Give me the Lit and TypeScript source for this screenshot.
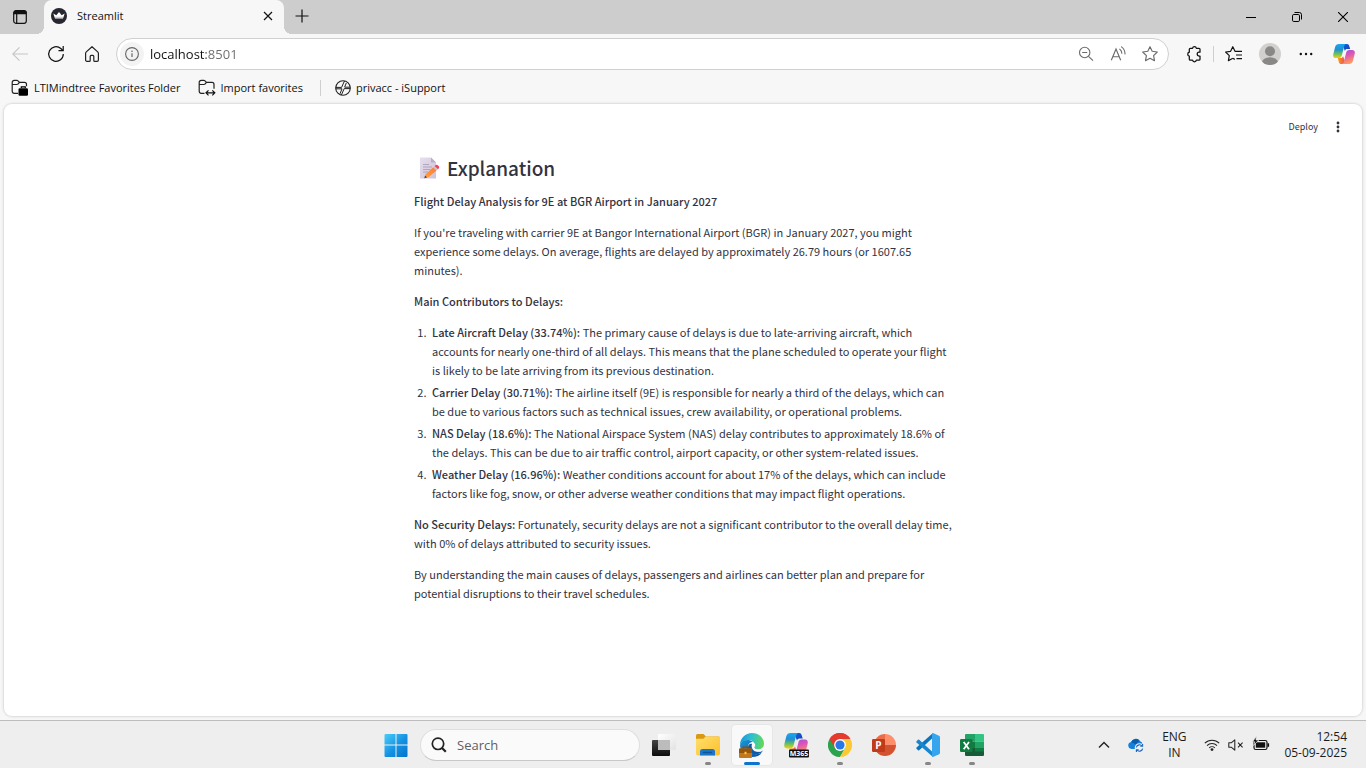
import { LitElement, html, svg, css, type TemplateResult } from "lit";
import { customElement, property } from "lit/decorators.js";
import { classMap } from "lit/directives/class-map.js";

const resetStyles = css`
  :host,
  * {
    box-sizing: border-box;
  }
  button {
    appearance: none;
    border: 0;
    padding: 0;
    margin: 0;
    background: none;
    color: inherit;
    font: inherit;
    display: flex;
    align-items: center;
    justify-content: center;
    cursor: default;
  }
  svg {
    display: block;
    flex: none;
  }
  a {
    color: inherit;
    text-decoration: none;
  }
`;

const icon = (size: number, body: TemplateResult, viewBox = size) =>
  html`<svg width=${size} height=${size} viewBox="0 0 ${viewBox} ${viewBox}" fill="none" aria-hidden="true">${body}</svg>`;

/* Window and toolbar icons */

const tabActionsIcon = icon(16, svg`
  <rect x="1.7" y="1.7" width="12.6" height="12.6" rx="2.2" stroke="#111" stroke-width="1.2"/>
  <path d="M1.5 5.2V4a2.5 2.5 0 0 1 2.5-2.5h8A2.5 2.5 0 0 1 14.5 4v1.2z" fill="#111"/>
  <path d="M4.7 5v9" stroke="#111" stroke-width="1.2"/>`);

const streamlitIcon = icon(16, svg`
  <circle cx="8" cy="8" r="8" fill="#262730"/>
  <path d="M2.3 5.6l3 1.7L8 4l2.7 3.3 3-1.7-1.7 5H4z" fill="#fff"/>
  <path d="M4 9.300h8" stroke="#b8b8bd" stroke-width=".8"/>`);

const closeTabIcon = icon(10, svg`<path d="M1 1l8 8M9 1L1 9" stroke="#111" stroke-width="1.2"/>`);
const plusIcon = icon(14, svg`<path d="M7 .5v13M.5 7h13" stroke="#111" stroke-width="1.2"/>`);
const minimizeIcon = icon(10, svg`<path d="M0 5.5h10" stroke="#000"/>`);
const restoreIcon = icon(10, svg`
  <rect x=".5" y="2.5" width="7" height="7" rx="1.3" stroke="#000"/>
  <path d="M2.5.5h4.8A2.2 2.2 0 0 1 9.5 2.7v4.8" stroke="#000"/>`);
const closeWindowIcon = icon(10, svg`<path d="M0 0l10 10M10 0L0 10" stroke="#000" stroke-width="1.1"/>`);

const backIcon = icon(16, svg`<path d="M16 8H.8M7.5 1.3L.8 8l6.7 6.7" stroke="#c6c6c6" stroke-width="1.2"/>`);
const refreshIcon = icon(18, svg`
  <path d="M16.3 9a7.3 7.3 0 1 1-2.5-5.500L16 5.5" stroke="#111" stroke-width="1.2"/>
  <path d="M16.2 1v4.7h-4.7" stroke="#111" stroke-width="1.2"/>`);
const homeIcon = icon(18, svg`
  <path d="M2.600 8.300c0-.6.300-1 .7-1.400L9 1.700l5.700 5.200c.4.400.7.800.7 1.400V15c0 .8-.5 1.300-1.300 1.300h-2.400c-.5 0-.9-.4-.9-.9v-4c0-.6-.4-1-1-1H8.200c-.6 0-1 .4-1 1v4c0 .5-.4.9-.9.9H3.900c-.8 0-1.300-.5-1.300-1.300z" stroke="#222" stroke-width="1.200" stroke-linejoin="round"/>`);
const infoIcon = icon(14, svg`
  <circle cx="7" cy="7" r="6.4" stroke="#666" stroke-width="1.1"/>
  <path d="M7 6.2V10" stroke="#666" stroke-width="1.2"/><circle cx="7" cy="4.2" r=".8" fill="#666"/>`);
const zoomOutIcon = icon(16, svg`
  <circle cx="6.7" cy="6.5" r="5.2" stroke="#6b6b6b" stroke-width="1.1"/>
  <path d="M4.2 6.5h5M10.5 10.3l4.5 4.4" stroke="#6b6b6b" stroke-width="1.1"/>`);
const readAloudIcon = icon(17, svg`
  <path d="M1.3 14.3L6 3l4.7 11.3M2.8 10.700h6.400" stroke="#6b6b6b" stroke-width="1.150"/>
  <path d="M9.800 3.200c1.300.9 2 2.400 2 4M11.500.9c2.200 1.600 3.500 4 3.500 7" stroke="#6b6b6b" stroke-width="1.100" stroke-linecap="round"/>`);
const starIcon = icon(18, svg`
  <path d="M9 1.700l2.200 4.600 5.100.7-3.700 3.600.9 5.100L9 13.300l-4.500 2.400.9-5.100L1.700 7l5.100-.7z" stroke="#6b6b6b" stroke-width="1.150" stroke-linejoin="round"/>`);
const extensionsIcon = icon(18, svg`
  <path d="M6.300 3.300h1.200a2 2 0 0 1 3.900 0H14c.6 0 1 .4 1 1V7.200h-.9a1.900 1.900 0 0 0 0 3.800h.9v3.200c0 .6-.4 1-1 1h-2.600a2 2 0 0 1-3.900 0H5.300c-.6 0-1-.4-1-1v-3.100a2 2 0 0 1 0-3.900V4.300c0-.6.4-1 1-1z" stroke="#111" stroke-width="1.250" stroke-linejoin="round"/>`);
const favoritesIcon = icon(18, svg`
  <path d="M10.700 6.400l-.7-.1-2.200-4.600-2.200 4.600-5 .7 3.700 3.600-.9 5.100 4.400-2.400M10.700 6.400h6.300M11 10h6M11.500 13.600H17" stroke="#111" stroke-width="1.200" stroke-linejoin="round"/>
  <path d="M8 13.200l1.800 1.300" stroke="#111" stroke-width="1.200"/>`);
const avatarIcon = icon(22, svg`
  <defs><clipPath id="avatar-clip"><circle cx="11" cy="11" r="11"/></clipPath></defs>
  <circle cx="11" cy="11" r="11" fill="#d2d0ce"/>
  <g clip-path="url(#avatar-clip)" fill="#8a8886"><circle cx="11" cy="8.3" r="5"/><ellipse cx="11" cy="19.5" rx="8" ry="5.2"/></g>`);
const moreIcon = icon(14, svg`
  <g fill="#111"><circle cx="1.8" cy="7" r="1.2"/><circle cx="7" cy="7" r="1.2"/><circle cx="12.2" cy="7" r="1.2"/></g>`);

const copilotArt = (id: string) => svg`
  <defs>
    <linearGradient id="${id}-a" x1="0" y1="0" x2="0" y2="1"><stop offset="0" stop-color="#1aa7ee"/><stop offset=".4" stop-color="#1f8fd6"/><stop offset=".68" stop-color="#5fbf62"/><stop offset="1" stop-color="#f4cf12"/></linearGradient>
    <linearGradient id="${id}-b" x1="0" y1="0" x2=".3" y2="1"><stop offset="0" stop-color="#9a52ea"/><stop offset=".45" stop-color="#dd56b4"/><stop offset="1" stop-color="#ff9a5e"/></linearGradient>
    <linearGradient id="${id}-c" x1="0" y1="0" x2="1" y2="1"><stop offset="0" stop-color="#0b63d8"/><stop offset="1" stop-color="#1c3fb8"/></linearGradient>
    <linearGradient id="${id}-d" x1="0" y1="0" x2="1" y2="0"><stop offset="0" stop-color="#f9a01b"/><stop offset="1" stop-color="#ef3f5c"/></linearGradient>
  </defs>
  <path d="M10 1h5.200c1.300 0 2 .8 2.400 2l1.100 3.600h-3.200c-1.300 0-2.100.7-2.500 2z" fill="url(#${id}-c)"/>
  <path d="M14 23H8.800c-1.300 0-2-.8-2.400-2l-1.100-4.600h3.200c1.300 0 2.100-.7 2.500-2z" fill="url(#${id}-d)"/>
  <path d="M6.600 1h8c-1.500.3-2.100 1.300-2.500 2.700L9.600 13.600c-.5 1.800-1.500 2.800-3.300 2.800H3.200C.6 16.400-.3 14.500.4 12L2.300 4.300C2.900 2.200 4.300 1 6.600 1z" fill="url(#${id}-a)"/>
  <path d="M17.400 23h-8c1.500-.3 2.100-1.300 2.500-2.700l2.500-9.900c.5-1.800 1.500-2.800 3.300-2.800h3.100c2.600 0 3.500 1.900 2.800 4.400l-1.900 7.700c-.6 2.100-2 3.300-4.300 3.300z" fill="url(#${id}-b)"/>`;

const copilotIcon = icon(22, copilotArt("copilot"), 24);

const managedFolderIcon = icon(18, svg`
  <path d="M7 14.300H3.200A2 2 0 0 1 1.200 12.300V3.400a2 2 0 0 1 2-2h2.600c.5 0 .9.200 1.200.5l1.500 1.500h5a2 2 0 0 1 2 2v1.800M1.500 5.500h4.300c.5 0 .9-.1 1.200-.5l1.500-1.600" stroke="#222" stroke-width="1.200"/>
  <rect x="7.500" y="9.200" width="9.500" height="7.600" rx="1.300" fill="#000"/>
  <path d="M10.300 9V7.800h4V9" stroke="#000" stroke-width="1.200"/>`);
const importFolderIcon = icon(18, svg`
  <path d="M6.500 14.300H3.200A2 2 0 0 1 1.200 12.300V3.400a2 2 0 0 1 2-2h2.600c.5 0 .9.200 1.200.5l1.500 1.500h5.500a2 2 0 0 1 2 2v4.300M1.500 5.500h4.300c.5 0 .9-.1 1.200-.5l1.500-1.600" stroke="#222" stroke-width="1.200"/>
  <path d="M8.300 13.800h8.200M10.500 11.300L8 13.800l2.500 2.500M14.300 11.300l2.500 2.500-2.500 2.500" stroke="#111" stroke-width="1.200"/>`);
const supportIcon = icon(16, svg`
  <circle cx="8" cy="8" r="7.3" stroke="#222" stroke-width="1.1"/>
  <path d="M.8 7.400h5.800L9.500.9M.8 8.800h6.200L5 13.800M15.200 7.200H9.800M15.200 8.600H9.200L6.300 15.200M9.600 7.200L11.300 3" stroke="#222" stroke-width="1"/>`);

/* Page icons */

const kebabIcon = icon(12, svg`
  <g fill="#31333f"><circle cx="6" cy="2" r="1.400"/><circle cx="6" cy="6" r="1.400"/><circle cx="6" cy="10" r="1.400"/></g>`);

const memoIcon = icon(22, svg`
  <defs>
    <linearGradient id="memo-sheet" x1="0" y1="0" x2="1" y2="1"><stop offset="0" stop-color="#e6dfee"/><stop offset="1" stop-color="#cdc3d8"/></linearGradient>
    <linearGradient id="memo-pencil" x1="1" y1="0" x2="0" y2="1"><stop offset="0" stop-color="#ff7a3c"/><stop offset="1" stop-color="#ffa23a"/></linearGradient>
  </defs>
  <path d="M2 .5h11L18 5.500V21.500H2z" fill="url(#memo-sheet)"/>
  <path d="M13 .5v5h5z" fill="#b9adc8"/>
  <path d="M5 10h9M5 12.500h7.500M5 15h5M5 7.500h6" stroke="#a79bb5" stroke-width=".8"/>
  <path d="M15.300 10.200l3.200 3.200-8 6.800-3.700.6.800-3.600z" fill="url(#memo-pencil)"/>
  <path d="M15.300 10.200l1.300-1.200 3.300 3.200-1.400 1.200z" fill="#c9c3cf"/>
  <path d="M16.600 9l1-.8c.8-.6 1.800-.5 2.400.2l.8.900c.6.700.5 1.600-.1 2.200l-.8.700z" fill="#f0405c"/>
  <path d="M6.300 21.200l.8-2.700 1.900 2z" fill="#4a3550"/>`);

/* Taskbar icons */

const startIcon = icon(24, svg`
  <defs><linearGradient id="start-fill" gradientUnits="userSpaceOnUse" x1="0" y1="0" x2="24" y2="24"><stop offset="0" stop-color="#4fd0fb"/><stop offset=".55" stop-color="#1391e2"/><stop offset="1" stop-color="#0672ca"/></linearGradient></defs>
  <path d="M1.500 1H11.500V11.500H.5V2q0-1 1-1zM12.500 1H22.500q1 0 1 1V11.500h-11zM.5 12.500h11V24h-10q-1 0-1-1zM12.500 12.500h11V23q0 1-1 1h-10z" fill="url(#start-fill)"/>`);
const searchIcon = icon(16, svg`
  <circle cx="7" cy="6.8" r="5.7" stroke="#222" stroke-width="1.7"/><path d="M11 10.900l3.800 3.900" stroke="#222" stroke-width="2.200"/>`);
const taskViewIcon = icon(24, svg`
  <defs>
    <linearGradient id="tv-back" x1="0" y1="0" x2="0" y2="1"><stop offset="0" stop-color="#454545"/><stop offset="1" stop-color="#0c0c0c"/></linearGradient>
    <linearGradient id="tv-front" x1="0" y1="0" x2="1" y2="1"><stop offset="0" stop-color="#fff"/><stop offset="1" stop-color="#e2e2e2"/></linearGradient>
  </defs>
  <rect x="0" y="7" width="18" height="16" rx="1" fill="url(#tv-back)"/>
  <rect x="6" y="1" width="18" height="16" rx="1" fill="url(#tv-front)"/>
  <path d="M6 7h12v10H6z" fill="#bcbcbc"/>`);
const explorerIcon = icon(26, svg`
  <defs><linearGradient id="folder" x1="0" y1="0" x2="1" y2="1"><stop offset="0" stop-color="#ffdf6d"/><stop offset="1" stop-color="#fdbf2c"/></linearGradient></defs>
  <path d="M1 3.500q0-1.500 1.500-1.500h6l2.500 2.500H23.500q1.500 0 1.500 1.500v6H1z" fill="#d99a12"/>
  <path d="M1 7.500q0-.8.800-.8H8.500l2-2.200H23.700q1.300 0 1.300 1.300V21.500q0 2-2 2H3q-2 0-2-2z" fill="url(#folder)"/>
  <path d="M5 23.500v-4q0-2.500 2.500-2.500h10q2.500 0 2.500 2.500v4z" fill="#1976c9"/>
  <path d="M8.500 20.500h8" stroke="#0f5499" stroke-width="1.400" stroke-linecap="round"/>`);
const edgeIcon = icon(26, svg`
  <defs>
    <linearGradient id="edge-top" x1="0" y1=".2" x2="1" y2=".3"><stop offset="0" stop-color="#1d93d8"/><stop offset=".5" stop-color="#2fc2cf"/><stop offset="1" stop-color="#63d856"/></linearGradient>
    <linearGradient id="edge-side" x1="0" y1="0" x2="1" y2="1"><stop offset="0" stop-color="#1698dc"/><stop offset="1" stop-color="#0c4f9e"/></linearGradient>
  </defs>
  <path d="M1 13C1 6 6.500 1 13 1s12 4.800 12 10.500c0 3.800-2.800 6-6 6-3 0-4.600-1.300-4.600-2.400 0-.8 1-1.100 1-2.700 0-2.400-2.400-4.400-6-4.400C5 8 2 10.500 1 13z" fill="url(#edge-top)"/>
  <path d="M1 13c1-3.500 4.500-5.500 8.500-5 2 .2 3.500 1 4.500 2-3-.2-5 2.200-5 5.200 0 4 3.500 7 8 7 2.500 0 4.500-.8 6-2C21 23.500 17.500 25 13 25 6.200 25 1 19.800 1 13z" fill="url(#edge-side)"/>
  <path d="M13.500 12c-1 3 .5 7.500 6 7.500 2 0 3.500-.6 4.500-1-1 2.300-4 3.900-7 3.900-4.500 0-8-3-8-7 0-2.200 1.500-4.500 4.500-3.400z" fill="#0d5ba8"/>
  <path d="M13.800 10.500c1.600.3 2.600 1.500 2.400 3-.2 1.200-1.200 1.700-.8 2.600.5 1 2.300 1.500 4.500 1.300 1.600-.2 3-.7 4-1.700.3 1-.1 2.500-.6 3.200-2.500 1.300-6.300 1.300-8.500-.5-2.200-1.900-3-5-1-7.900z" fill="#f9f9f9"/>
  <rect x="0" y="16.500" width="13" height="9.500" rx="1" fill="#c4761a"/>
  <path d="M0 17.500q0-1 1-1h11q1 0 1 1v3.500H0z" fill="#96530b"/>
  <path d="M4 16.500v-1.300h5v1.300" stroke="#8c4d09" stroke-width="1.200"/><rect x="5.500" y="19.800" width="2" height="2.400" fill="#ffc83d"/>`);
const m365Icon = icon(26, svg`
  <g transform="translate(1 0)">${copilotArt("m365")}</g>
  <rect x="6" y="17.500" width="20" height="8" rx="1" fill="#111"/>
  <text x="16" y="24" font-family="Open Sans, sans-serif" font-size="7" font-weight="700" fill="#fff" text-anchor="middle">M365</text>`);
const chromeIcon = icon(24, svg`
  <path d="M12 12L1.600 6A12 12 0 0 1 22.400 6z" fill="#e33b2e"/>
  <path d="M12 12L1.600 6A12 12 0 0 0 12 24l5.200-9z" fill="#2ba24c"/>
  <path d="M12 12l5.200 3L12 24A12 12 0 0 0 22.400 6H12z" fill="#fcc934"/>
  <path d="M1.600 6l5.200 9L12 6h10.400A12 12 0 0 0 1.600 6z" fill="#e33b2e"/>
  <circle cx="12" cy="12" r="5.900" fill="#fff"/><circle cx="12" cy="12" r="4.600" fill="#2b76e8"/>`);
const powerpointIcon = icon(26, svg`
  <path d="M14 2A11 11 0 0 0 3 13h11z" fill="#ec6c47"/>
  <path d="M14 2a11 11 0 0 1 11 11l-5.500 2L14 13z" fill="#ff8f6b"/>
  <path d="M3 13a11 11 0 0 0 22 0z" fill="#d35230"/>
  <rect x="1" y="7" width="13" height="13" rx="1.200" fill="#c13b1b"/>
  <text x="7.500" y="17.200" font-family="Open Sans, sans-serif" font-size="10" font-weight="700" fill="#fff" text-anchor="middle">P</text>`);
const vscodeIcon = icon(24, svg`
  <path d="M17 0l-1 5.500L3.200 17.200c-.4.300-.8.300-1.100 0L.5 15.700c-.4-.4-.4-.9 0-1.200z" fill="#0b76bd"/>
  <path d="M17 24l-1-5.500L3.200 6.800c-.4-.3-.8-.3-1.100 0L.5 8.300c-.4.400-.4.900 0 1.200z" fill="#1787d1"/>
  <path d="M17 24c-.6-.2-1-.5-1-1V1c0-.5.400-.8 1-1l6 2.800c.6.300 1 .8 1 1.500v15.400c0 .7-.4 1.200-1 1.500z" fill="#35a6ee"/>`);
const excelIcon = icon(26, svg`
  <path d="M7 2h9v7.500H6V3q0-1 1-1z" fill="#21a366"/><path d="M16 2h8q1 0 1 1v6.500h-9z" fill="#33c481"/>
  <path d="M6 9.500h10V16H6z" fill="#107c41"/><path d="M16 9.500h9V16h-9z" fill="#21a366"/>
  <path d="M6 16h19v7q0 1-1 1H7q-1 0-1-1z" fill="#185c37"/><path d="M16 16h9v3.500h-9z" fill="#107c41"/>
  <rect x="1" y="7" width="12.500" height="13" rx="1.200" fill="#107c41"/>
  <path d="M4.700 10l5.300 7.200M10 10l-5.300 7.200" stroke="#fff" stroke-width="1.800"/>`);

const chevronUpIcon = icon(12, svg`<path d="M1 8.500l5-5 5 5" stroke="#222" stroke-width="1.400"/>`);
const onedriveIcon = icon(16, svg`
  <path d="M3.500 12a3.600 3.600 0 0 1-.4-7.100A5 5 0 0 1 11.800 4a3.800 3.800 0 0 1 2.700 3.500V12z" fill="#1380da"/>
  <path d="M3.100 4.900A5 5 0 0 1 11.800 4c-1.600.3-2.800 1.600-3.600 3.600z" fill="#0b5cad"/>
  <circle cx="11.500" cy="11" r="4.800" fill="#eee"/>
  <path d="M8.300 10.300a3.300 3.300 0 0 1 5.900-1.100M14.700 11.700a3.300 3.300 0 0 1-5.900 1.100M14.600 7v2.300h-2.300M8.400 15v-2.300h2.300" stroke="#1565c0" stroke-width="1.100"/>`, 16);
const wifiIcon = icon(16, svg`
  <g stroke="#222" stroke-width="1.100"><path d="M.8 6.200a10.200 10.200 0 0 1 14.400 0M3 8.600a7.100 7.100 0 0 1 10 0M5.200 10.900a4 4 0 0 1 5.600 0"/></g><circle cx="8" cy="12.600" r="1.400" fill="#222"/>`);
const mutedIcon = icon(16, svg`
  <path d="M.8 5.800v4.400h2.400l3.600 3V2.800l-3.600 3zM10 5.700l4.600 4.600M14.600 5.700L10 10.300" stroke="#222" stroke-width="1.050" stroke-linejoin="round"/>`);
const batteryIcon = icon(18, svg`
  <rect x="2" y="4.500" width="13" height="9" rx="1.800" stroke="#111" stroke-width="1.200"/>
  <rect x="3.800" y="6.300" width="9.400" height="5.400" fill="#111"/>
  <path d="M16.300 7.300v3.500" stroke="#111" stroke-width="1.600"/>
  <path d="M4.300 .5L.5 5.800h2.300L1.600 9.500 6.700 4H4z" fill="#111" stroke="#eee" stroke-width=".7"/>`);

@customElement("browser-chrome")
class BrowserChrome extends LitElement {
  @property() pageTitle = "";
  @property() address = "";

  static styles = [
    resetStyles,
    css`
      :host {
        display: block;
        background: #f7f7f7;
        color: #111;
        font: 11px/16px "Open Sans", "Segoe UI", sans-serif;
      }
      .strip {
        display: flex;
        height: 34px;
        background: #cdcdcd;
      }
      .tab-actions {
        width: 40px;
        margin-right: 4px;
      }
      .tab {
        position: relative;
        width: 240px;
        display: flex;
        align-items: center;
        gap: 10px;
        padding: 0 11px 2px 7px;
        background: #f7f7f7;
        border-radius: 8px 8px 0 0;
      }
      .tab::before,
      .tab::after {
        content: "";
        position: absolute;
        bottom: 0;
        width: 8px;
        height: 8px;
      }
      .tab::before {
        left: -8px;
        background: radial-gradient(circle at 0 0, transparent 8px, #f7f7f7 8px);
      }
      .tab::after {
        right: -8px;
        background: radial-gradient(circle at 100% 0, transparent 8px, #f7f7f7 8px);
      }
      .tab-title {
        flex: 1;
      }
      .new-tab {
        width: 36px;
        height: 32px;
      }
      .window-controls {
        display: flex;
        margin-left: auto;
      }
      .window-controls button {
        width: 46px;
      }
      .toolbar {
        display: flex;
        align-items: center;
        padding: 4px 2px 2px 2px;
      }
      .tool {
        width: 36px;
        height: 32px;
      }
      .copilot {
        width: 40px;
      }
      .address-bar {
        flex: 1;
        display: flex;
        align-items: center;
        height: 32px;
        margin: 0 7px 0 6px;
        padding: 0 2px 0 3px;
        background: #fff;
        border: 1px solid #d0d0d0;
        border-radius: 16px;
      }
      .site-info {
        width: 24px;
        height: 24px;
        border-radius: 12px;
        background: #f3f3f3;
      }
      .address {
        flex: 1;
        min-width: 0;
        margin-left: 6px;
        padding: 0;
        border: 0;
        outline: 0;
        background: linear-gradient(to right, #111 56px, #6b6b6b 56px);
        background-clip: text;
        -webkit-background-clip: text;
        color: transparent;
        font: 13px/20px "Open Sans", "Segoe UI", sans-serif;
      }
      .address-bar .tool {
        width: 32px;
      }
      .divider {
        width: 1px;
        height: 16px;
        margin: 0 2px 0 1px;
        background: #cfcfcf;
      }
      .favorites {
        display: flex;
        align-items: center;
        height: 32px;
        padding: 0 11px;
      }
      .favorite {
        display: flex;
        align-items: center;
        gap: 5px;
        margin-right: 17px;
      }
      .favorites .divider {
        margin: 0 14px 0 0;
      }
    `,
  ];

  render() {
    return html`
      <div class="strip">
        <button class="tab-actions" aria-label="Tab actions menu">${tabActionsIcon}</button>
        <div class="tab">
          ${streamlitIcon}
          <span class="tab-title">${this.pageTitle}</span>
          <button aria-label="Close tab">${closeTabIcon}</button>
        </div>
        <button class="new-tab" aria-label="New tab">${plusIcon}</button>
        <div class="window-controls">
          <button aria-label="Minimize">${minimizeIcon}</button>
          <button aria-label="Restore">${restoreIcon}</button>
          <button aria-label="Close">${closeWindowIcon}</button>
        </div>
      </div>
      <nav class="toolbar">
        <button class="tool" aria-label="Back" disabled>${backIcon}</button>
        <button class="tool" aria-label="Refresh">${refreshIcon}</button>
        <button class="tool" aria-label="Home">${homeIcon}</button>
        <div class="address-bar">
          <button class="site-info" aria-label="View site information">${infoIcon}</button>
          <input class="address" aria-label="Address and search bar" .value=${this.address} />
          <button class="tool" aria-label="Zoom out">${zoomOutIcon}</button>
          <button class="tool" aria-label="Read aloud">${readAloudIcon}</button>
          <button class="tool" aria-label="Add to favorites">${starIcon}</button>
        </div>
        <button class="tool" aria-label="Extensions">${extensionsIcon}</button>
        <span class="divider"></span>
        <button class="tool" aria-label="Favorites">${favoritesIcon}</button>
        <button class="tool" aria-label="Profile">${avatarIcon}</button>
        <button class="tool" aria-label="Settings and more">${moreIcon}</button>
        <button class="tool copilot" aria-label="Copilot">${copilotIcon}</button>
      </nav>
      <nav class="favorites">
        <a class="favorite" href="#">${managedFolderIcon}LTIMindtree Favorites Folder</a>
        <a class="favorite" href="#">${importFolderIcon}Import favorites</a>
        <span class="divider"></span>
        <a class="favorite" href="#">${supportIcon}privacc - iSupport</a>
      </nav>
    `;
  }
}

interface Contributor {
  label: string;
  text: string;
}

const contributors: Contributor[] = [
  {
    label: "Late Aircraft Delay (33.74%):",
    text: "The primary cause of delays is due to late-arriving aircraft, which accounts for nearly one-third of all delays. This means that the plane scheduled to operate your flight is likely to be late arriving from its previous destination.",
  },
  {
    label: "Carrier Delay (30.71%):",
    text: "The airline itself (9E) is responsible for nearly a third of the delays, which can be due to various factors such as technical issues, crew availability, or operational problems.",
  },
  {
    label: "NAS Delay (18.6%):",
    text: "The National Airspace System (NAS) delay contributes to approximately 18.6% of the delays. This can be due to air traffic control, airport capacity, or other system-related issues.",
  },
  {
    label: "Weather Delay (16.96%):",
    text: "Weather conditions account for about 17% of the delays, which can include factors like fog, snow, or other adverse weather conditions that may impact flight operations.",
  },
];

@customElement("streamlit-page")
class StreamlitPage extends LitElement {
  static styles = [
    resetStyles,
    css`
      :host {
        display: block;
        background: #fff;
        color: #31333f;
        font: 11px/19px "Source Sans Pro", "Noto Sans CJK JP", sans-serif;
      }
      header {
        display: flex;
        justify-content: flex-end;
        align-items: center;
        gap: 14px;
        height: 45px;
        padding-right: 18px;
        font-size: 9px;
      }
      .frame {
        padding-left: 4px;
      }
      main {
        max-width: 542px;
        margin: 0 auto;
      }
      h3 {
        display: flex;
        align-items: center;
        gap: 7px;
        margin: 0 0 12px;
        padding: 6px 0 0 4px;
        font-size: 19px;
        line-height: 25px;
        font-weight: 500;
      }
      p {
        margin: 0 0 12px;
      }
      strong {
        font-weight: 500;
      }
      ol {
        margin: 0 0 12px;
        padding: 0 0 0 15px;
      }
      li {
        margin: 0 0 3px;
        padding-left: 3px;
      }
      li:last-child {
        margin: 0;
      }
    `,
  ];

  render() {
    return html`
      <header>
        <button>Deploy</button>
        <button aria-label="Main menu">${kebabIcon}</button>
      </header>
      <div class="frame">
        <main>
          <h3>${memoIcon}Explanation</h3>
          <p><strong>Flight Delay Analysis for 9E at BGR Airport in January 2027</strong></p>
          <p>
            If you're traveling with carrier 9E at Bangor International Airport (BGR) in January 2027, you might
            experience some delays. On average, flights are delayed by approximately 26.79 hours (or 1607.65 minutes).
          </p>
          <p><strong>Main Contributors to Delays:</strong></p>
          <ol>
            ${contributors.map((c) => html`<li><strong>${c.label}</strong> ${c.text}</li>`)}
          </ol>
          <p>
            <strong>No Security Delays:</strong> Fortunately, security delays are not a significant contributor to the
            overall delay time, with 0% of delays attributed to security issues.
          </p>
          <p>
            By understanding the main causes of delays, passengers and airlines can better plan and prepare for
            potential disruptions to their travel schedules.
          </p>
        </main>
      </div>
    `;
  }
}

interface TaskbarApp {
  name: string;
  art: TemplateResult;
  running?: boolean;
  active?: boolean;
}

const taskbarApps: TaskbarApp[] = [
  { name: "Task View", art: taskViewIcon },
  { name: "File Explorer", art: explorerIcon, running: true },
  { name: "Microsoft Edge", art: edgeIcon, running: true, active: true },
  { name: "Microsoft 365 Copilot", art: m365Icon },
  { name: "Google Chrome", art: chromeIcon, running: true },
  { name: "PowerPoint", art: powerpointIcon },
  { name: "Visual Studio Code", art: vscodeIcon, running: true },
  { name: "Excel", art: excelIcon, running: true },
];

@customElement("task-bar")
class TaskBar extends LitElement {
  static styles = [
    resetStyles,
    css`
      :host {
        display: grid;
        grid-template-columns: 1fr auto 1fr;
        align-items: center;
        height: 48px;
        padding-left: 2px;
        background: #eeeeee;
        border-top: 1px solid #bdbdbd;
        color: #1b1b1b;
        font: 12px/16px "Open Sans", "Segoe UI", sans-serif;
      }
      .apps {
        grid-column: 2;
        display: flex;
        align-items: center;
      }
      .app {
        position: relative;
        width: 40px;
        height: 40px;
        margin: 0 2px;
        border-radius: 4px;
      }
      .active {
        background: #f9f9f9;
        box-shadow: 0 0 0 1px #e6e6e6;
      }
      .running::after {
        content: "";
        position: absolute;
        bottom: 0;
        width: 6px;
        height: 3px;
        border-radius: 2px;
        background: #868686;
      }
      .active::after {
        width: 16px;
        background: #0a74d0;
      }
      .search {
        display: flex;
        align-items: center;
        gap: 10px;
        width: 220px;
        height: 32px;
        margin: 0 2px;
        padding: 0 10px;
        background: #fafafa;
        border: 1px solid #dedede;
        border-bottom-color: #c8c8c8;
        border-radius: 16px;
      }
      .search input {
        flex: 1;
        min-width: 0;
        padding: 0;
        border: 0;
        outline: 0;
        background: none;
        font: 13px/20px "Open Sans", "Segoe UI", sans-serif;
      }
      .search input::placeholder {
        color: #5f5f5f;
        opacity: 1;
      }
      .tray {
        grid-column: 3;
        justify-self: end;
        display: flex;
        align-items: center;
        padding-right: 19px;
      }
      .tray-item {
        width: 32px;
        height: 40px;
      }
      .language {
        width: 44px;
      }
      .status {
        gap: 8px;
        padding: 0 14px 0 8px;
      }
      .clock {
        flex-direction: column;
        align-items: flex-end;
      }
    `,
  ];

  render() {
    return html`
      <div class="apps">
        <button class="app" aria-label="Start">${startIcon}</button>
        <label class="search">${searchIcon}<input type="text" placeholder="Search" aria-label="Search" /></label>
        ${taskbarApps.map(
          (app) => html`<button
            class=${classMap({ app: true, running: !!app.running, active: !!app.active })}
            aria-label=${app.name}
          >
            ${app.art}
          </button>`,
        )}
      </div>
      <div class="tray">
        <button class="tray-item" aria-label="Show hidden icons">${chevronUpIcon}</button>
        <button class="tray-item" aria-label="OneDrive">${onedriveIcon}</button>
        <button class="language">ENG<br />IN</button>
        <button class="status" aria-label="Network, volume and battery">${wifiIcon}${mutedIcon}${batteryIcon}</button>
        <button class="clock"><span>12:54</span><span>05-09-2025</span></button>
      </div>
    `;
  }
}

@customElement("app-root")
class AppRoot extends LitElement {
  static styles = css`
    :host {
      display: flex;
      flex-direction: column;
      height: 100vh;
      background: #f7f7f7;
    }
    .page {
      flex: 1;
      min-height: 0;
      overflow: hidden;
      margin: 0 4px 4px;
      border-radius: 8px;
      box-shadow: 0 0 2px 1px #dadada;
    }
  `;

  render() {
    return html`
      <browser-chrome pageTitle="Streamlit" address="localhost:8501"></browser-chrome>
      <streamlit-page class="page"></streamlit-page>
      <task-bar></task-bar>
    `;
  }
}
